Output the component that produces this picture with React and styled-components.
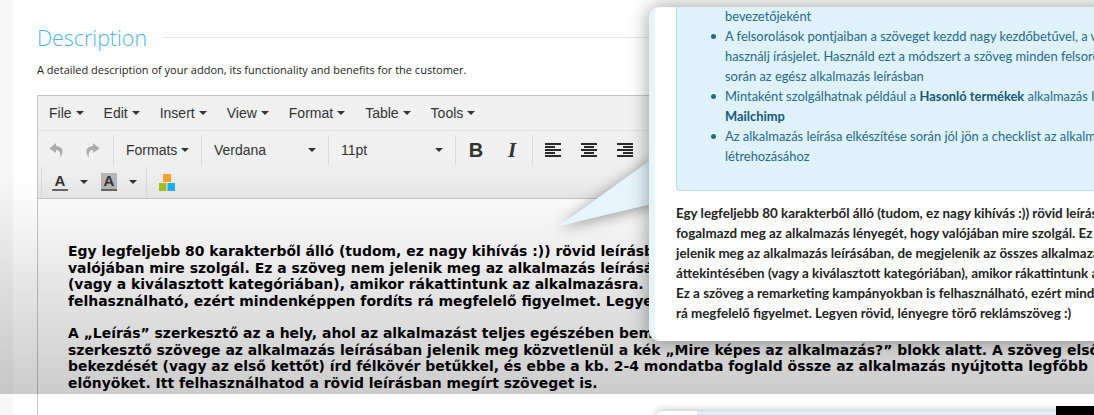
import React from "react";
import styled, { createGlobalStyle } from "styled-components";

const Global = createGlobalStyle`
  html, body { margin: 0; padding: 0; background: #fff; }
  body { width: 1094px; height: 415px; overflow: hidden; font-family: "Open Sans", sans-serif; }
`;
const Page = styled.div`
  position: relative; width: 1094px; height: 415px; overflow: hidden; background: #fff;
  display: flex;
`;
const Rail = styled.div`width: 13px; flex: none; background: #f7f7f7;`;
const Main = styled.main`flex: 1; min-width: 0; padding: 21px 0 0 24px;`;
const Head = styled.div`display: flex; align-items: center; gap: 15px; height: 33px;`;
const Title = styled.h2`margin: 0; font: 300 21.4px/33px "Open Sans", sans-serif; color: #4db4ee; white-space: nowrap;`;
const Rule = styled.div`flex: 1; height: 1px; background: #e8e8e8;`;
const Hint = styled.p`margin: 8px 0 0; font: 400 11px/16px "Open Sans", sans-serif; color: #222; height: 17px;`;
const Editor = styled.section`
  margin-top: 16px; border: 1px solid #c5c5c5; border-right: 0; border-bottom: 0; height: 330px; overflow: hidden;
  font-family: "Liberation Sans", Arial, sans-serif; color: #333;
`;
const Menubar = styled.div`
  display: flex; height: 34px; align-items: center; padding-left: 11px; gap: 20px;
  background: #f0f0f0; border-bottom: 1px solid #e2e2e2; font-size: 14px;
`;
const MenuItem = styled.span`display: inline-flex; align-items: center; gap: 4px; color: #333;`;
const Caret = styled.i`
  display: inline-block; width: 0; height: 0; border: 4px solid transparent; border-top-color: #333;
  border-bottom: 0; margin-left: ${p => p.$ml || 0}px;
`;
const Toolbars = styled.div`
  background: linear-gradient(to bottom, #f0f0f0 40%, #e8e8e8); border-bottom: 1px solid #c5c5c5;
  padding: 3px 0 2px; height: 62px; box-sizing: content-box;
`;
const ToolRow = styled.div`display: flex; align-items: center; height: 32px; padding-left: ${p => p.$pl || 0}px;`;
const Group = styled.div`
  display: flex; align-items: center; height: 30px; padding: ${p => p.$pad || "0 12px"};
  gap: ${p => p.$gap || 0}px; border-right: 1px solid #d9d9d9;
  &:last-child { border-right: 0; }
`;
const StartGroup = styled(Group)`border-left: ${p => p.$left ? "1px solid #d9d9d9" : "0"};`;
const Drop = styled.div`display: flex; align-items: center; justify-content: space-between; width: ${p => p.$w}px; font-size: 14px; color: #333;`;
const Glyph = styled.span`font: italic 700 21px "Liberation Serif", serif; width: 16px; text-align: center; color: #333;`;
const BoldGlyph = styled.span`font: 700 20px "Liberation Sans", sans-serif; width: 16px; text-align: center; color: #333;`;
const ColorA = styled.span`
  display: inline-block; width: 16px; height: 16px; margin-left: ${p => p.$ml || 0}px; text-align: center;
  font: 700 15px/16px "Liberation Sans", sans-serif; color: #333;
  border-bottom: 2px solid #666; background: ${p => p.$bg || "transparent"};
`;
const Content = styled.div`
  height: 215px; background: #fff; padding: 44px 0 0 30px; white-space: nowrap;
  font: 700 13.95px/16.5px Verdana, "DejaVu Sans", sans-serif; color: #000;
`;
const Para = styled.p`margin: 0 0 16px;`;
const Line = styled.span`display: block;`;
const Fade = styled.div`
  position: absolute; left: 0; right: 0; top: 175px; height: 219px; pointer-events: none;
  background: linear-gradient(to bottom, rgba(0,0,0,0), rgba(0,0,0,.2));
`;
const Pop = styled.aside`
  position: absolute; left: 649px; top: 7px; width: 560px; height: 334px; background: #fff;
  border-left: 6px solid #e6f5fc; border-radius: 10px 0 0 10px; overflow: hidden;
  box-shadow: 0 0 20px rgba(0,0,0,.4);
  font: 400 12.9px/20px Lato, "Noto Sans", sans-serif; white-space: nowrap; padding-left: 21px; box-sizing: border-box;
`;
const Tail = styled.svg`
  position: absolute; left: 555px; top: 150px; width: 100px; height: 85px; overflow: visible;
  filter: drop-shadow(0 2px 7px rgba(0,0,0,.4));
`;
const Note = styled.div`
  height: 185px; margin-top: -1px; box-sizing: border-box; background: #dff1f9; border: 1px solid #b9e3f5; border-top: 0;
  border-radius: 0 0 4px 4px; color: #256a89;
`;
const Wrapped = styled.div`padding-left: 48px;`;
const Bullet = styled.div`
  position: relative; padding-left: 48px;
  &::before { content: ""; position: absolute; left: 34px; top: 8px; width: 5px; height: 5px; border-radius: 50%; background: #256a89; }
`;
const Strong = styled.b`font-weight: 700; color: #14587a;`;
const Copy = styled.p`margin: 12px 0 0; font-size: 13.4px; font-weight: 700; color: #222;`;
const Next = styled.div`
  position: absolute; left: 656px; top: 411px; width: 450px; height: 10px; background: #d8f0fa;
  box-shadow: 0 0 8px rgba(0,0,0,.3); border-radius: 6px 0 0 0;
  font: 400 13px/20px Lato, "Noto Sans", sans-serif; color: #2b6f8d; overflow: hidden; white-space: nowrap;
  padding-left: 85px; box-sizing: border-box;
`;
const NextWhite = styled.div`position: absolute; left: 0; top: 0; width: 41px; height: 10px; background: #fff;`;
const Black = styled.div`position: absolute; left: 1056px; top: 406px; width: 38px; height: 9px; background: #000;`;

const AlignIcon = ({ kind }) => {
  const widths = [16, 10, 16, 10, 16];
  return (
    <svg width="16" height="15" viewBox="0 0 16 15">
      {widths.map((w, i) => {
        const x = kind === "left" ? 0 : kind === "center" ? (16 - w) / 2 : 16 - w;
        return <rect key={i} x={x} y={i * 3} width={w} height="2" fill="#2a2a2a" />;
      })}
    </svg>
  );
};
const Undo = ({ flip }) => (
  <svg width="16" height="16" viewBox="0 0 16 16" style={flip ? { transform: "scaleX(-1)" } : undefined}>
    <path d="M7 1 L0.5 6.5 L7 11 V8 C10.5 8 12 10.5 11 15.5 C14.5 11.5 15.5 4.5 7 4 Z" fill="#ababab" />
  </svg>
);
const Cubes = () => (
  <svg width="16" height="17" viewBox="0 0 16 17">
    <rect x="4" y="0" width="8" height="8" fill="#f7a12c" />
    <rect x="0" y="9" width="7.5" height="8" fill="#a0c020" />
    <rect x="8.5" y="9" width="7.5" height="8" fill="#1fb0ea" />
  </svg>
);

export default function App() {
  return (
    <Page>
      <Global />
      <Rail />
      <Main>
        <Head><Title>Description</Title><Rule /></Head>
        <Hint>A detailed description of your addon, its functionality and benefits for the customer.</Hint>
        <Editor>
          <Menubar>
            {["File", "Edit", "Insert", "View", "Format", "Table", "Tools"].map(m => (
              <MenuItem key={m}>{m}<Caret /></MenuItem>
            ))}
          </Menubar>
          <Toolbars>
            <ToolRow>
              <Group $pad="0 13px 0 11px" $gap={19}><Undo /><Undo flip /></Group>
              <Group><Drop $w={63}>Formats<Caret /></Drop></Group>
              <Group><Drop $w={102}>Verdana<Caret /></Drop></Group>
              <Group><Drop $w={102}>11pt<Caret /></Drop></Group>
              <Group $gap={20}><BoldGlyph>B</BoldGlyph><Glyph>I</Glyph></Group>
              <Group $gap={20}><AlignIcon kind="left" /><AlignIcon kind="center" /><AlignIcon kind="right" /></Group>
            </ToolRow>
            <ToolRow $pl={3}>
              <StartGroup $left $pad="0 9px 0 10px">
                <ColorA>A</ColorA><Caret $ml={12} />
                <ColorA $bg="#b4b4b4" $ml={13}>A</ColorA><Caret $ml={12} />
              </StartGroup>
              <Group><Cubes /></Group>
            </ToolRow>
          </Toolbars>
          <Content>
            <Para>
              <Line>Egy legfeljebb 80 karakterből álló (tudom, ez nagy kihívás :)) rövid leírásban fogalmazd meg az alkalmazás lényegét, hogy</Line>
              <Line>valójában mire szolgál. Ez a szöveg nem jelenik meg az alkalmazás leírásában, de megjelenik az összes alkalmazás</Line>
              <Line>(vagy a kiválasztott kategóriában), amikor rákattintunk az alkalmazásra. Ez a szöveg a remarketing kampányokban is</Line>
              <Line>felhasználható, ezért mindenképpen fordíts rá megfelelő figyelmet. Legyen rövid, lényegre törő reklámszöveg :)</Line>
            </Para>
            <Para>
              <Line>A „Leírás” szerkesztő az a hely, ahol az alkalmazást teljes egészében bemutathatod. A „Leírás”</Line>
              <Line>szerkesztő szövege az alkalmazás leírásában jelenik meg közvetlenül a kék „Mire képes az alkalmazás?” blokk alatt. A szöveg első</Line>
              <Line>bekezdését (vagy az első kettőt) írd félkövér betűkkel, és ebbe a kb. 2-4 mondatba foglald össze az alkalmazás nyújtotta legfőbb</Line>
              <Line>előnyöket. Itt felhasználhatod a rövid leírásban megírt szöveget is.</Line>
            </Para>
          </Content>
        </Editor>
      </Main>
      <Fade />
      <Tail viewBox="0 0 100 85">
        <polygon points="99,8 6,75 99,53" fill="#e6f5fc" stroke="#e6f5fc" strokeWidth="1" strokeLinejoin="round" />
      </Tail>
      <Pop>
        <Note>
          <Wrapped>bevezetőjeként</Wrapped>
          <Bullet>A felsorolások pontjaiban a szöveget kezdd nagy kezdőbetűvel, a végén ne</Bullet>
          <Wrapped>használj írásjelet. Használd ezt a módszert a szöveg minden felsorolásánál</Wrapped>
          <Wrapped>során az egész alkalmazás leírásban</Wrapped>
          <Bullet>Mintaként szolgálhatnak például a <Strong>Hasonló termékek</Strong> alkalmazás leírása vagy a</Bullet>
          <Wrapped><Strong>Mailchimp</Strong></Wrapped>
          <Bullet>Az alkalmazás leírása elkészítése során jól jön a checklist az alkalmazás leírás</Bullet>
          <Wrapped>létrehozásához</Wrapped>
        </Note>
        <Copy>
          <Line>Egy legfeljebb 80 karakterből álló (tudom, ez nagy kihívás :)) rövid leírásban</Line>
          <Line>fogalmazd meg az alkalmazás lényegét, hogy valójában mire szolgál. Ez a szöveg nem</Line>
          <Line>jelenik meg az alkalmazás leírásában, de megjelenik az összes alkalmazás</Line>
          <Line>áttekintésében (vagy a kiválasztott kategóriában), amikor rákattintunk az alkalmazásra.</Line>
          <Line>Ez a szöveg a remarketing kampányokban is felhasználható, ezért mindenképpen fordíts</Line>
          <Line>rá megfelelő figyelmet. Legyen rövid, lényegre törő reklámszöveg :)</Line>
        </Copy>
      </Pop>
      <Next><NextWhite />Az alkalmazás leírása elkészítése során jól jön a checklist</Next>
      <Black />
    </Page>
  );
}
